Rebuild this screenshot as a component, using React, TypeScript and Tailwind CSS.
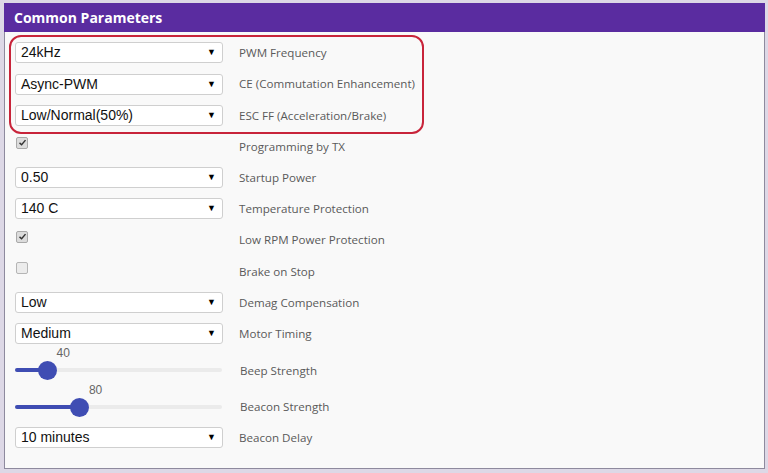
import React from 'react';

type Row =
  | { kind: 'select'; value: string; label: string }
  | { kind: 'check'; checked: boolean; label: string }
  | { kind: 'slider'; value: number; label: string; h: string };

const rows: Row[] = [
  { kind: 'select', value: '24kHz', label: 'PWM Frequency' },
  { kind: 'select', value: 'Async-PWM', label: 'CE (Commutation Enhancement)' },
  { kind: 'select', value: 'Low/Normal(50%)', label: 'ESC FF (Acceleration/Brake)' },
  { kind: 'check', checked: true, label: 'Programming by TX' },
  { kind: 'select', value: '0.50', label: 'Startup Power' },
  { kind: 'select', value: '140 C', label: 'Temperature Protection' },
  { kind: 'check', checked: true, label: 'Low RPM Power Protection' },
  { kind: 'check', checked: false, label: 'Brake on Stop' },
  { kind: 'select', value: 'Low', label: 'Demag Compensation' },
  { kind: 'select', value: 'Medium', label: 'Motor Timing' },
  { kind: 'slider', value: 40, label: 'Beep Strength', h: 'h-[37px]' },
  { kind: 'slider', value: 80, label: 'Beacon Strength', h: 'h-[36px]' },
  { kind: 'select', value: '10 minutes', label: 'Beacon Delay' },
];

const Select = ({ value }: { value: string }) => (
  <div className="w-[208px] h-[21px] bg-white border border-[#cfcfcf] rounded-[3px] flex items-center justify-between pl-[5px] pr-[6px] font-['Liberation_Sans',Arial,sans-serif] text-[14px] text-[#111]">
    <span>{value}</span>
    <span className="text-[9px] text-black leading-none">▼</span>
  </div>
);

const Check = ({ checked }: { checked: boolean }) => (
  <div className="w-[208px] h-full flex items-start pt-[6px]">
    <span
      className={`ml-[1px] w-[12px] h-[12px] rounded-[2px] border flex items-center justify-center ${
        checked ? 'bg-[#dcdcdc] border-[#a9a9a9]' : 'bg-[#ececec] border-[#b5b5b5]'
      }`}
    >
      {checked && (
        <svg viewBox="0 0 12 12" className="w-[9px] h-[9px]">
          <path d="M2 6.5 L4.8 9 L10 2.8" fill="none" stroke="#333" strokeWidth="1.9" />
        </svg>
      )}
    </span>
  </div>
);

const Slider = ({ value }: { value: number }) => {
  const pct = value / 255;
  const thumbX = pct * 207;
  return (
    <div className="w-[208px] h-full flex flex-col">
      <div className="relative h-[11px]">
        <span
          className="absolute -top-[2px] font-['Liberation_Sans',Arial,sans-serif] text-[12px] text-[#666] leading-none"
          style={{ left: thumbX + 9 }}
        >
          {value}
        </span>
      </div>
      <div className="relative h-[20px] w-[207px]">
        <div className="absolute left-0 right-0 top-[8px] h-[4px] rounded-full bg-[#ebebeb]" />
        <div
          className="absolute left-0 top-[8px] h-[4px] rounded-full bg-[#3f4db3]"
          style={{ width: thumbX }}
        />
        <div
          className="absolute top-[0.5px] w-[19px] h-[19px] rounded-full bg-[#3f4db3]"
          style={{ left: thumbX - 9.5 }}
        />
      </div>
    </div>
  );
};

export default function App() {
  return (
    <div className="w-[768px] h-[473px] bg-[#ddd8e6] pt-[3px] pl-[4px] overflow-hidden">
      <div className="w-[761px] h-[466px] bg-[#f9f9f9] border border-t-0 border-[#8e8a9e] flex flex-col">
        <div className="h-[29px] bg-[#5a2ca0] flex items-center pl-[10px] font-['Open_Sans',sans-serif] font-bold text-[14px] text-white -mx-px">
          Common Parameters
        </div>
        <div className="relative pt-[5.4px] pl-[10px]">
          {/* highlight around the first three parameters */}
          <div className="absolute left-[4px] top-[3px] w-[415px] h-[99px] border-2 border-[#c8243a] rounded-[12px] pointer-events-none" />
          {rows.map((r, i) => (
            <div
              key={i}
              className={`flex items-center gap-[16px] ${r.kind === 'slider' ? r.h : 'h-[31.2px]'}`}
            >
              {r.kind === 'select' && <Select value={r.value} />}
              {r.kind === 'check' && <Check checked={r.checked} />}
              {r.kind === 'slider' && <Slider value={r.value} />}
              <span
                className={`font-['Open_Sans',sans-serif] text-[11.6px] text-[#5a5a5a] ${
                  r.kind === 'slider' ? 'pt-[5px] pl-[1px]' : ''
                }`}
              >
                {r.label}
              </span>
            </div>
          ))}
        </div>
      </div>
    </div>
  );
}
